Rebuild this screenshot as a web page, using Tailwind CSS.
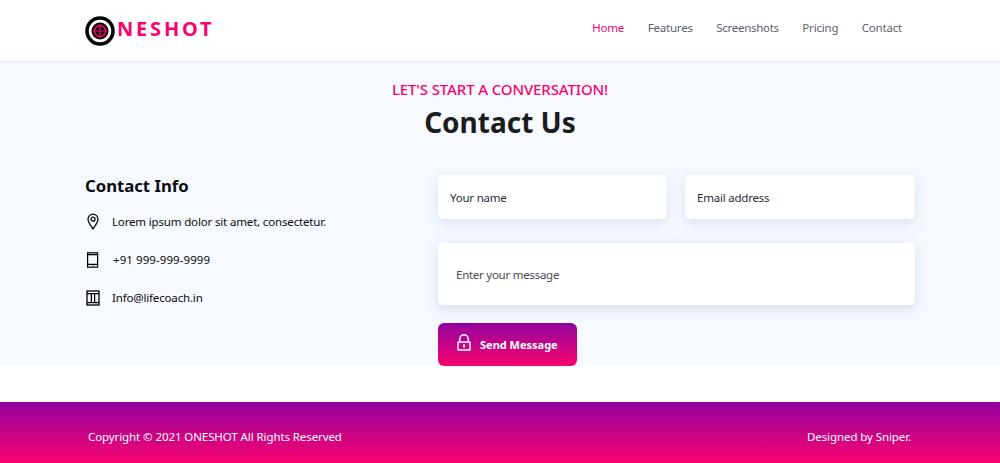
<!DOCTYPE html>
<html lang="en">
  <head>
    <meta charset="UTF-8" />
    <meta name="viewport" content="width=device-width, initial-scale=1.0" />
    <title>Oneshot - Contact</title>
    <script src="https://cdn.jsdelivr.net/npm/@tailwindcss/browser@4"></script>
  </head>
  <body class="bg-white font-['Noto_Sans',sans-serif] overflow-hidden">
    <!-- header -->
    <header class="h-[62px] bg-white border-b border-[#e9eef5]">
      <div class="w-[830px] mx-auto h-full flex items-center justify-between">
        <a class="flex items-center">
          <svg class="w-[30px] h-[30px] mr-[2px]" viewBox="0 0 30 30" fill="none">
            <circle cx="15" cy="15" r="13" stroke="#000" stroke-width="3.5" />
            <circle cx="15" cy="15" r="8.5" fill="#12060c" />
            <circle cx="15" cy="15" r="5.5" stroke="#f9046f" stroke-width="1.4" />
            <path d="M15 8v14M8 15h14" stroke="#f9046f" stroke-width="1.1" />
          </svg>
          <span class="text-[#f9046f] text-[20px] leading-none font-bold tracking-[2.8px] -mt-[4px]">NESHOT</span>
        </a>
        <nav class="flex items-center gap-[23.5px] pr-[13px] pb-[5px] text-[11.5px] tracking-[-0.2px] text-[#5f5f6b]">
          <a class="text-[#f9046f]">Home</a>
          <a>Features</a>
          <a class="tracking-[-0.28px]">Screenshots</a>
          <a>Pricing</a>
          <a>Contact</a>
        </nav>
      </div>
    </header>

    <!-- contact -->
    <section class="h-[304px] bg-[#f6f9ff]">
      <div class="text-center pt-[17px]">
        <p class="text-[#f9046f] text-[15px] leading-[20px] font-medium tracking-[-0.12px]">LET'S START A CONVERSATION!</p>
        <h2 class="text-[#1c1c1c] text-[28px] leading-[40px] font-bold mt-[3px]">Contact Us</h2>
      </div>
      <div class="w-[830px] mx-auto flex mt-[33px]">
        <div class="w-[353px] shrink-0">
          <h3 class="text-[#0c0c0c] text-[16.7px] leading-[24px] font-bold -mt-[1px]">Contact Info</h3>
          <ul class="mt-[14px] flex flex-col gap-[18px] text-[11.5px] tracking-[-0.16px] leading-[20px] text-[#0c0c0c]">
            <li class="flex items-center">
              <svg class="w-[16px] h-[17px] mr-[11px] -mt-[1px]" viewBox="0 0 16 17" fill="none" stroke="#000" stroke-width="1.2">
                <path d="M8 16C5.6 12.2 3 9.4 3 6.2a5 5 0 0 1 10 0c0 3.2-2.6 6-5 9.8z" />
                <circle cx="8" cy="6.2" r="2" />
              </svg>
              Lorem ipsum dolor sit amet, consectetur.
            </li>
            <li class="flex items-center">
              <svg class="w-[16px] h-[16px] mr-[11px]" viewBox="0 0 16 16" fill="none" stroke="#000" stroke-width="1.2">
                <rect x="2.6" y="0.8" width="10" height="14.4" />
                <path d="M2.6 2.6h10M2.6 12.4h10" />
                <path d="M6.8 13.8h2.4" stroke="#666" stroke-width="1" />
              </svg>
              <span class="ml-[1px] tracking-[0.08px]">+91 999-999-9999</span>
            </li>
            <li class="flex items-center">
              <svg class="w-[16px] h-[16px] mr-[11px]" viewBox="0 0 16 16" fill="none" stroke="#000" stroke-width="1.3">
                <rect x="2" y="1" width="12" height="14" />
                <path d="M2 3.6h12M2 12.6h12M6.4 3.6v9M9.6 3.6v9" />
              </svg>
              Info@lifecoach.in
            </li>
          </ul>
        </div>
        <form class="flex-1 flex flex-col">
          <div class="flex gap-[18px]">
            <div class="w-[229px] h-[44px] bg-white rounded-[5px] shadow-[0_4px_14px_rgba(100,120,160,0.18)] flex items-center pl-[12px] pt-[1px] text-[11.5px] tracking-[-0.22px] text-[#2b2b35]">Your name</div>
            <div class="flex-1 h-[44px] bg-white rounded-[5px] shadow-[0_4px_14px_rgba(100,120,160,0.18)] flex items-center pl-[12px] pt-[1px] text-[11.5px] tracking-[-0.22px] text-[#2b2b35]">Email address</div>
          </div>
          <div class="h-[62px] mt-[24px] bg-white rounded-[5px] shadow-[0_4px_14px_rgba(100,120,160,0.22)] flex items-center pl-[18px] pt-[2px] text-[11.5px] tracking-[-0.26px] text-[#4a4a52]">Enter your message</div>
          <button type="button" class="mt-[18px] w-[139px] h-[43px] rounded-[6px] bg-linear-to-b/srgb from-[#91039e] to-[#f9046f] flex items-center pl-[18px] pt-[1px] text-white text-[11px] font-bold">
            <svg class="w-[16px] h-[17px] mr-[8px] -mt-[5px]" viewBox="0 0 16 17" fill="none" stroke="#fff" stroke-width="1.4">
              <path d="M3.8 8V5a4.2 4.2 0 0 1 8.4 0v3" />
              <rect x="2" y="8" width="12" height="8" rx="0.6" />
              <path d="M8 10.2v3.4" stroke-width="1.8" />
            </svg>
            Send Message
          </button>
        </form>
      </div>
    </section>

    <!-- footer -->
    <footer class="mt-[36px] h-[61px] bg-linear-to-b/srgb from-[#91039e] to-[#f9046f]">
      <div class="w-[830px] mx-auto h-full flex items-center justify-between pl-[3px] pt-[8px] text-white text-[11.5px] tracking-[-0.09px]">
        <span>Copyright © 2021 ONESHOT All Rights Reserved</span>
        <span class="pr-[4px]">Designed by Sniper.</span>
      </div>
    </footer>
  </body>
</html>
